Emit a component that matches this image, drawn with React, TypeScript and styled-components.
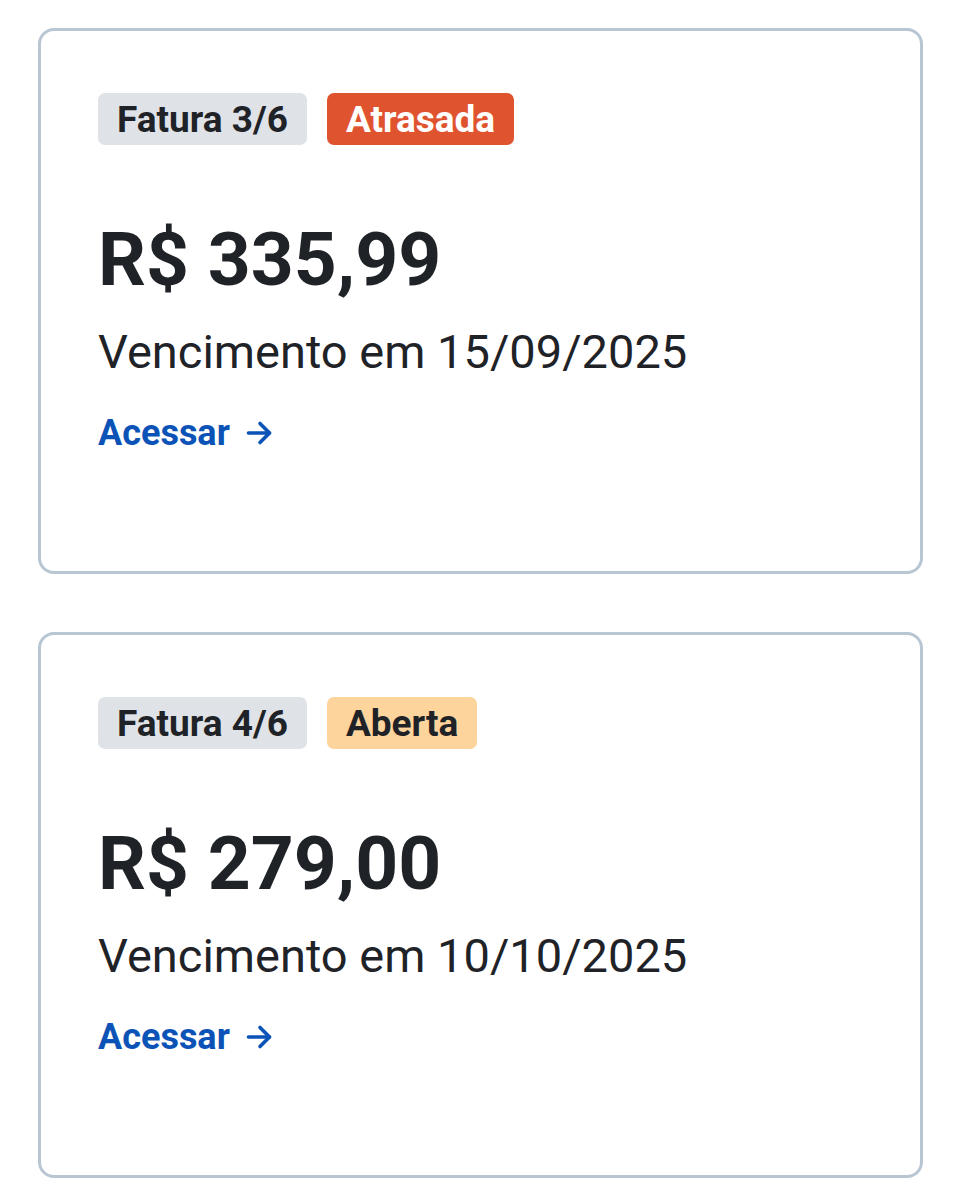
import styled, { createGlobalStyle } from 'styled-components';

const GlobalStyle = createGlobalStyle`
  body {
    margin: 0;
    background: #ffffff;
    font-family: Roboto, "Noto Sans", "Liberation Sans", sans-serif;
    color: #1f2328;
  }
`

type Status = 'late' | 'open';

interface Invoice {
    parcel: string;
    status: Status;
    amount: string;
    due: string;
}

const invoices: Invoice[] = [
    { parcel: 'Fatura 3/6', status: 'late', amount: 'R$ 335,99', due: '15/09/2025' },
    { parcel: 'Fatura 4/6', status: 'open', amount: 'R$ 279,00', due: '10/10/2025' },
];

const statusLabel: Record<Status, string> = {
    late: 'Atrasada',
    open: 'Aberta',
};

const ArrowIcon = () => (
    <svg width="27" height="26" viewBox="0 0 27 26" fill="none" stroke="currentColor"
        strokeWidth="3.6" strokeLinecap="round" strokeLinejoin="round">
        <path d="M2.5 13h21" />
        <path d="M14 3.5l9.5 9.5-9.5 9.5" />
    </svg>
);

const App = () => {
    return (
        <Page>
            <GlobalStyle />
            {invoices.map((inv) => (
                <Card key={inv.parcel}>
                    <BadgeRow>
                        <Badge>{inv.parcel}</Badge>
                        <Badge $status={inv.status}>{statusLabel[inv.status]}</Badge>
                    </BadgeRow>
                    <Amount>{inv.amount}</Amount>
                    <DueDate>Vencimento em {inv.due}</DueDate>
                    <AccessLink href="#">
                        Acessar
                        <ArrowIcon />
                    </AccessLink>
                </Card>
            ))}
        </Page>
    );
}

const Page = styled.div`
    display: flex;
    flex-direction: column;
    gap: 58px;
    padding: 28px 38px;
`
const Card = styled.div`
    box-sizing: border-box;
    min-height: 546px;
    border: 3px solid #b8c6d4;
    border-radius: 16px;
    padding: 62px 57px;
    display: flex;
    flex-direction: column;
    align-items: flex-start;
`
const BadgeRow = styled.div`
    display: flex;
    gap: 20px;
`
const Badge = styled.span<{ $status?: Status }>`
    display: inline-flex;
    align-items: center;
    height: 52px;
    padding: 0 19px;
    border-radius: 7px;
    font-size: 37px;
    font-weight: 700;
    background: ${(p) => p.$status === 'late' ? '#e0532f' : p.$status === 'open' ? '#fdd49b' : '#dfe3e8'};
    color: ${(p) => p.$status === 'late' ? '#ffffff' : '#1f2328'};
`
const Amount = styled.div`
    margin-top: 77px;
    font-size: 75px;
    line-height: 1;
    font-weight: 700;
    color: #1f2328;
`
const DueDate = styled.div`
    margin-top: 31px;
    font-size: 47px;
    line-height: 1;
    color: #1f2328;
`
const AccessLink = styled.a`
    margin-top: 40px;
    display: inline-flex;
    align-items: center;
    gap: 16px;
    font-size: 36px;
    line-height: 1;
    font-weight: 700;
    color: #0b53b6;
    text-decoration: none;
`
export default App;
